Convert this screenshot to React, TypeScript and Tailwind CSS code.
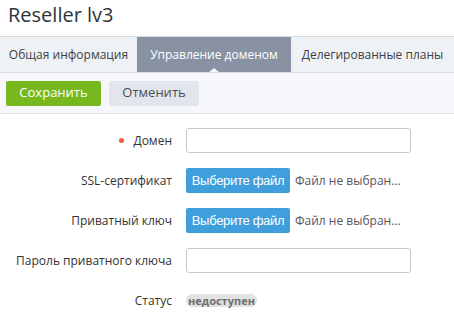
import React from 'react';

const font = { fontFamily: '"Open Sans", "Liberation Sans", sans-serif' };

type Row = {
  label: string;
  required?: boolean;
  kind: 'input' | 'file' | 'status';
};

const rows: Row[] = [
  { label: 'Домен', required: true, kind: 'input' },
  { label: 'SSL-сертификат', kind: 'file' },
  { label: 'Приватный ключ', kind: 'file' },
  { label: 'Пароль приватного ключа', kind: 'input' },
  { label: 'Статус', kind: 'status' },
];

const tabs = [
  { name: 'Общая информация', width: 'w-[137px]' },
  { name: 'Управление доменом', width: 'w-[154px]', active: true },
  { name: 'Делегированные планы', width: 'flex-1' },
];

function Field({ row }: { row: Row }) {
  if (row.kind === 'input') {
    return <input className="h-[25px] w-[225px] rounded-[3px] border border-[#c4c9d0] bg-white outline-none" />;
  }
  if (row.kind === 'file') {
    return (
      <div className="flex items-center">
        <button
          className="h-[25px] w-[104px] rounded-[2px] bg-[#3f9fdd] text-[13px] tracking-[-0.3px] text-white"
          style={{ fontFamily: '"Liberation Sans", Arial, sans-serif' }}
        >
          Выберите файл
        </button>
        <span className="ml-[5px] text-[12px] text-[#555]">Файл не выбран...</span>
      </div>
    );
  }
  return (
    <span className="flex h-[13px] w-[71px] items-center justify-center rounded-full bg-[#e2e2e2] text-[11px] font-bold leading-none text-[#6f6f6f]">
      недоступен
    </span>
  );
}

export default function App() {
  return (
    <div className="h-[314px] w-[454px] overflow-hidden bg-white text-[#333]" style={font}>
      <div className="h-9 pl-2 text-[20px] leading-[30px] text-[#2f3338]">Reseller lv3</div>

      <div className="flex h-[37px] border-y border-[#d6dadf] bg-[#eff2f5] text-[12px]">
        {tabs.map(tab => (
          <div
            key={tab.name}
            className={`relative flex items-center justify-center ${tab.width} ${
              tab.active ? 'bg-[#8992a3] text-white' : 'text-[#3c3f45]'
            }`}
          >
            {tab.name}
            {tab.active && (
              <span className="absolute bottom-0 left-1/2 -translate-x-1/2 border-x-[5px] border-b-[4px] border-x-transparent border-b-[#f5f7fa]" />
            )}
          </div>
        ))}
      </div>

      <div className="flex h-[41px] items-center gap-2 border-b border-[#dfe2e6] bg-[#f5f7fa] px-[6px]">
        <button className="h-[25px] w-[95px] rounded-[2px] bg-[#76b81e] text-[13px] text-white">Сохранить</button>
        <button className="h-[25px] w-[90px] rounded-[2px] bg-[#e2e6ec] text-[13px] text-[#4a4d52]">Отменить</button>
      </div>

      <div className="flex flex-col gap-[15px] pt-[14px]">
        {rows.map(row => (
          <div key={row.label} className="flex h-[25px] items-center">
            <div className="flex w-[172px] items-center justify-end text-[12px] text-[#333]">
              {row.required && <span className="mr-[9px] h-[5px] w-[5px] rounded-full bg-[#e8603c]" />}
              {row.label}
            </div>
            <div className="ml-[14px]">
              <Field row={row} />
            </div>
          </div>
        ))}
      </div>
    </div>
  );
}
